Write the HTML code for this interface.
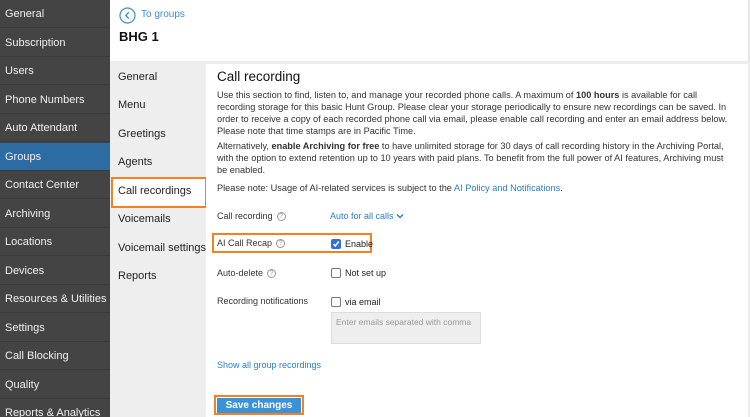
<!DOCTYPE html>
<html><head><meta charset="utf-8"><style>
*{margin:0;padding:0;box-sizing:border-box}
html,body{width:750px;height:417px;overflow:hidden}
body{background:#ececec;font-family:"Liberation Sans",sans-serif;position:relative}
.a{position:absolute;white-space:nowrap}
#side{position:absolute;left:0;top:0;width:110px;height:417px;background:#444;overflow:hidden}
#side div{position:absolute;left:0;width:110px;height:28px;border-bottom:1px solid #3a3a3a;color:#f0f0f0;font-size:11px;padding:8px 0 0 5px;white-space:nowrap}
#hdr{position:absolute;left:110px;top:0;width:640px;height:61px;background:#fff;border-right:2px solid #e6e6e6}
#sub{position:absolute;left:110px;top:64px;width:96px;height:353px;background:#eeeeee}
#sub div{position:absolute;left:8px;font-size:11px;color:#222;white-space:nowrap}
#main{position:absolute;left:206px;top:64px;width:542px;height:353px;background:#fff}
p.t{position:absolute;left:217px;width:530px;font-size:9.2px;line-height:12px;color:#333;white-space:nowrap}
.lbl{position:absolute;left:217px;font-size:9px;color:#333;white-space:nowrap}
.q{display:inline-block;width:9px;height:9px;border:1px solid #999;border-radius:50%;font-size:7px;line-height:7px;text-align:center;color:#999;margin-left:4px;vertical-align:1px}
.cb{position:absolute;width:10px;height:10px;border:1px solid #777;border-radius:2px;background:#fff}
.ob{position:absolute;border:2px solid #f58220}
</style></head><body>
<div id="side">
<div style="top:0">General</div>
<div style="top:28.5px">Subscription</div>
<div style="top:57px">Users</div>
<div style="top:85.5px">Phone Numbers</div>
<div style="top:114px">Auto Attendant</div>
<div style="top:142.5px;background:#2d6ca3">Groups</div>
<div style="top:171px">Contact Center</div>
<div style="top:199.5px">Archiving</div>
<div style="top:228px">Locations</div>
<div style="top:256.5px">Devices</div>
<div style="top:285px">Resources &amp; Utilities</div>
<div style="top:313.5px">Settings</div>
<div style="top:342px">Call Blocking</div>
<div style="top:370.5px">Quality</div>
<div style="top:399px">Reports &amp; Analytics</div>
</div>
<div id="hdr"></div>
<svg class="a" style="left:119px;top:7px" width="17" height="17" viewBox="0 0 17 17"><circle cx="8.5" cy="8.5" r="7.5" fill="none" stroke="#3a8fd6" stroke-width="1.2"/><path d="M9.8 5.3 L6.8 8.5 L9.8 11.7" fill="none" stroke="#3a8fd6" stroke-width="1.4"/></svg>
<div class="a" style="left:141px;top:9px;font-size:10px;color:#3a8fd6">To groups</div>
<div class="a" style="left:119px;top:29px;font-size:13px;font-weight:bold;color:#111">BHG 1</div>
<div id="sub">
<div style="top:7px">General</div>
<div style="top:35px">Menu</div>
<div style="top:64px">Greetings</div>
<div style="top:92px">Agents</div>
<div style="top:121px">Call recordings</div>
<div style="top:149px">Voicemails</div>
<div style="top:178px">Voicemail settings</div>
<div style="top:206px">Reports</div>
</div>
<div style="position:absolute;left:111px;top:177px;width:96px;height:31px;background:#fff;border:2px solid #f58220"></div>
<div class="a" style="left:118px;top:185px;font-size:11px;color:#222">Call recordings</div>
<div id="main"></div>
<div class="a" style="left:217px;top:69px;font-size:13.5px;color:#111">Call recording</div>
<p class="t" style="top:89px">Use this section to find, listen to, and manage your recorded phone calls. A maximum of <b>100 hours</b> is available for call<br>recording storage for this basic Hunt Group. Please clear your storage periodically to ensure new recordings can be saved. In<br>order to receive a copy of each recorded phone call via email, please enable call recording and enter an email address below.<br>Please note that time stamps are in Pacific Time.</p>
<p class="t" style="top:140px">Alternatively, <b>enable Archiving for free</b> to have unlimited storage for 30 days of call recording history in the Archiving Portal,<br>with the option to extend retention up to 10 years with paid plans. To benefit from the full power of AI features, Archiving must<br>be enabled.</p>
<p class="t" style="top:182px">Please note: Usage of AI-related services is subject to the <span style="color:#2a7fc9">AI Policy and Notifications</span>.</p>
<div class="lbl" style="top:211px">Call recording<span class="q">?</span></div>
<div class="a" style="left:330px;top:211px;font-size:9px;color:#2a7fc9">Auto for all calls <svg width="8" height="6" viewBox="0 0 8 6"><path d="M1 1.5 L4 4.5 L7 1.5" fill="none" stroke="#2a7fc9" stroke-width="1.4"/></svg></div>
<div class="ob" style="left:212px;top:233px;width:160px;height:20px"></div>
<div class="lbl" style="top:238px">AI Call Recap<span class="q">?</span></div>
<div class="cb" style="left:331px;top:239px;background:#2f6fe0;border-color:#2f6fe0"><svg width="8" height="8" viewBox="0 0 8 8" style="position:absolute;left:0;top:0"><path d="M1.5 4 L3.3 6 L6.8 1.5" fill="none" stroke="#fff" stroke-width="1.5"/></svg></div>
<div class="a" style="left:345px;top:239px;font-size:9px;color:#222">Enable</div>
<div class="lbl" style="top:268px">Auto-delete<span class="q">?</span></div>
<div class="cb" style="left:331px;top:268px"></div>
<div class="a" style="left:345px;top:268px;font-size:9px;color:#222">Not set up</div>
<div class="lbl" style="top:296px">Recording notifications</div>
<div class="cb" style="left:331px;top:297px"></div>
<div class="a" style="left:345px;top:297px;font-size:9px;color:#222">via email</div>
<div class="a" style="left:331px;top:312px;width:150px;height:32px;background:#eee;border:1px solid #ddd;font-size:8.5px;color:#999;padding:4px 0 0 4px">Enter emails separated with comma</div>
<div class="a" style="left:217px;top:360px;font-size:9px;color:#2a7fc9">Show all group recordings</div>
<div class="ob" style="left:214px;top:395px;width:90px;height:20px"></div>
<div class="a" style="left:217px;top:398px;width:84px;height:15px;background:#3a92d8;color:#fff;font-size:10px;font-weight:bold;text-align:center;line-height:15px">Save changes</div>
</body></html>
